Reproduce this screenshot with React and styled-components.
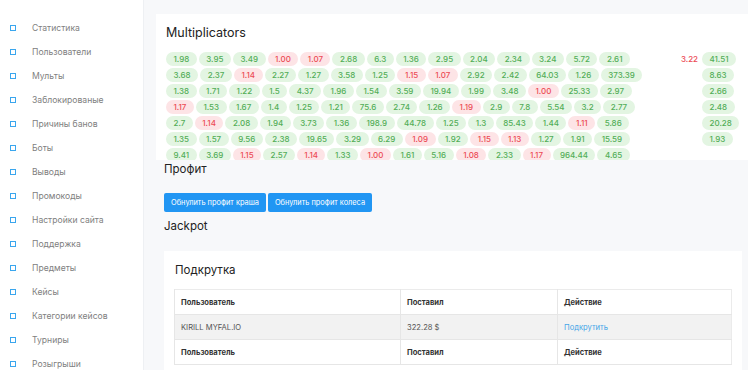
import React from "react";
import styled, { createGlobalStyle } from "styled-components";

const menu = [
  "Статистика",
  "Пользователи",
  "Мульты",
  "Заблокированые",
  "Причины банов",
  "Боты",
  "Выводы",
  "Промокоды",
  "Настройки сайта",
  "Поддержка",
  "Предметы",
  "Кейсы",
  "Категории кейсов",
  "Турниры",
  "Розыгрыши",
];

const rows = [
  "1.98 3.95 3.49 1.00 1.07 2.68 6.3 1.36 2.95 2.04 2.34 3.24 5.72 2.61",
  "3.68 2.37 1.14 2.27 1.27 3.58 1.25 1.15 1.07 2.92 2.42 64.03 1.26 373.39",
  "1.38 1.71 1.22 1.5 4.37 1.96 1.54 3.59 19.94 1.99 3.48 1.00 25.33 2.97",
  "1.17 1.53 1.67 1.4 1.25 1.21 75.6 2.74 1.26 1.19 2.9 7.8 5.54 3.2 2.77",
  "2.7 1.14 2.08 1.94 3.73 1.36 198.9 44.78 1.25 1.3 85.43 1.44 1.11 5.86",
  "1.35 1.57 9.56 2.38 19.65 3.29 6.29 1.09 1.92 1.15 1.13 1.27 1.91 15.59",
  "9.41 3.69 1.15 2.57 1.14 1.33 1.00 1.61 5.16 1.08 2.33 1.17 964.44 4.65",
].map((r) => r.split(" "));

const side = ["41.51", "8.63", "2.66", "2.48", "20.28", "1.93"];

const isLow = (v) => parseFloat(v) < 1.2;

export default function App() {
  return (
    <>
      <GlobalStyle />
      <Layout>
        <Sidebar>
          {menu.map((item) => (
            <MenuItem key={item}>
              <MenuIcon />
              {item}
            </MenuItem>
          ))}
        </Sidebar>
        <Main>
          <MultCard>
            <CardTitle>Multiplicators</CardTitle>
            <PillArea>
              <PillRows>
                {rows.map((row, i) => (
                  <PillRow key={i}>
                    {row.map((v, j) => (
                      <Pill key={j} $low={isLow(v)}>
                        {v}
                      </Pill>
                    ))}
                  </PillRow>
                ))}
              </PillRows>
              <SideColumn>
                <Current>3.22</Current>
                {side.map((v, i) => (
                  <Pill key={i} $low={isLow(v)} $side>
                    {v}
                  </Pill>
                ))}
              </SideColumn>
            </PillArea>
          </MultCard>
          <Section>
            <Heading>Профит</Heading>
            <Buttons>
              <Button>Обнулить профит краша</Button>
              <Button>Обнулить профит колеса</Button>
            </Buttons>
            <Heading>Jackpot</Heading>
            <Card>
              <Heading $inner>Подкрутка</Heading>
              <Table>
                <colgroup>
                  <col style={{ width: 226 }} />
                  <col style={{ width: 157 }} />
                  <col />
                </colgroup>
                <tbody>
                  <tr>
                    <Th>Пользователь</Th>
                    <Th>Поставил</Th>
                    <Th>Действие</Th>
                  </tr>
                  <DataRow>
                    <Td>KIRILL MYFAL.IO</Td>
                    <Td>322.28 $</Td>
                    <Td>
                      <Link>Подкрутить</Link>
                    </Td>
                  </DataRow>
                  <tr>
                    <Th>Пользователь</Th>
                    <Th>Поставил</Th>
                    <Th>Действие</Th>
                  </tr>
                </tbody>
              </Table>
            </Card>
          </Section>
        </Main>
      </Layout>
    </>
  );
}

const GlobalStyle = createGlobalStyle`
  body {
    margin: 0;
    font-family: Inter, "Noto Sans", sans-serif;
    background: #f7f8fa;
    overflow: hidden;
  }
`;

const Layout = styled.div`
  display: flex;
  width: 748px;
  height: 370px;
  overflow: hidden;
`;

const Sidebar = styled.nav`
  width: 144px;
  flex-shrink: 0;
  background: #fff;
  border-right: 1px solid #eef0f3;
  box-sizing: border-box;
  padding-top: 16px;
`;

const MenuItem = styled.div`
  display: flex;
  align-items: center;
  height: 24px;
  padding-left: 10px;
  font-size: 8.6px;
  color: #808080;
`;

const MenuIcon = styled.span`
  width: 4px;
  height: 4px;
  border: 1.3px solid #3aa6ee;
  margin-right: 16px;
`;

const Main = styled.main`
  flex: 1;
  min-width: 0;
  padding: 14px 6px 0 12px;
  display: flex;
  flex-direction: column;
`;

const MultCard = styled.section`
  background: #fff;
  height: 146px;
  margin-right: -20px;
  padding: 10px 10px 0;
  box-sizing: border-box;
  overflow: hidden;
  flex-shrink: 0;
`;

const CardTitle = styled.h2`
  margin: 0 0 10px;
  font-size: 12.5px;
  line-height: 18px;
  font-weight: 400;
  color: #222;
`;

const PillArea = styled.div`
  display: flex;
`;

const PillRows = styled.div`
  width: 514px;
  flex-shrink: 0;
  display: flex;
  flex-direction: column;
  gap: 2px;
`;

const PillRow = styled.div`
  display: flex;
  gap: 2px;
`;

const Pill = styled.span`
  grid-column: ${(p) => (p.$side ? 2 : "auto")};
  justify-self: start;
  flex-shrink: 0;
  height: 14px;
  line-height: 14px;
  padding: 0 7.5px;
  border-radius: 7px;
  font-size: 8px;
  font-weight: 500;
  text-align: center;
  background: ${(p) => (p.$low ? "#fde4e6" : "#e3f5e2")};
  color: ${(p) => (p.$low ? "#ec4b55" : "#52ad57")};
`;

const SideColumn = styled.div`
  display: grid;
  grid-template-columns: 22px auto;
  row-gap: 2px;
  align-content: start;
`;

const Current = styled.span`
  grid-column: 1;
  grid-row: 1;
  font-size: 8px;
  font-weight: 500;
  line-height: 14px;
  color: #ec4b55;
  text-align: right;
  padding-right: 4px;
`;

const Section = styled.div`
  padding-left: 8px;
  display: flex;
  flex-direction: column;
`;

const Heading = styled.h3`
  margin: ${(p) => (p.$inner ? "0 0 11px 1px" : "1px 0 0")};
  font-size: 11.5px;
  line-height: 16px;
  font-weight: 400;
  color: #222;
`;

const Buttons = styled.div`
  display: flex;
  gap: 2px;
  margin: 16px 0 5px;
`;

const Button = styled.button`
  height: 19px;
  padding: 0 7px;
  border: none;
  border-radius: 2px;
  background: #2196f3;
  color: #fff;
  font-family: inherit;
  font-size: 7.4px;
`;

const Card = styled.div`
  margin-top: 17px;
  background: #fff;
  padding: 11px 10px 20px;
  box-sizing: border-box;
`;

const Table = styled.table`
  width: 100%;
  border-collapse: collapse;
  table-layout: fixed;
  border: 1px solid #ebebeb;
`;

const cell = `
  height: 24px;
  padding: 0 6px;
  text-align: left;
  border-left: 1px solid #e6e6e6;
  border-bottom: 1px solid #e6e6e6;
  font-size: 7.6px;
`;

const Th = styled.td`
  ${cell}
  font-weight: 700;
  color: #333;
`;

const Td = styled.td`
  ${cell}
  color: #555;
`;

const DataRow = styled.tr`
  background: #f2f2f2;
`;

const Link = styled.span`
  color: #45a6e8;
`;
